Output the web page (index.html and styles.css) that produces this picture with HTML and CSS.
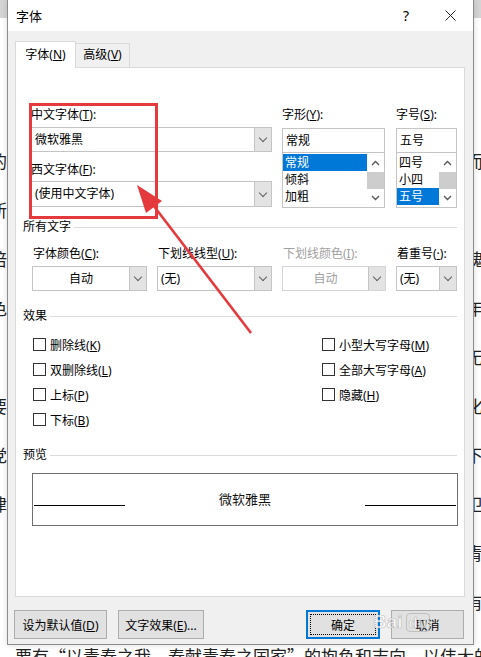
FILE: index.html
```html
<!DOCTYPE html>
<html lang="zh-CN">

<head>
	<meta charset="UTF-8">
	<meta name="viewport" content="width=device-width, initial-scale=1.0">
	<title>字体</title>
	<link rel="stylesheet" href="styles.css">
</head>

<body>
	<!-- 背后的文档页面 -->
	<div class="doc">
		<div class="doc-bar"></div>
		<div class="doc-lines">
			<p>的青春，必将在实现中华民族伟大复兴的历史进程中绽放光彩，而</p>
			<p>所以，广大青年要坚定理想信念，把个人理想融入国家发展之中，师</p>
			<p>倍加珍惜这个伟大时代，勇于担当时代赋予的历史使命，书写无愧的</p>
			<p>色的青春篇章，在奋斗中释放青春激情，追逐青春理想，展现青年</p>
			<p>　　新时代的中国青年，生逢其时，重任在肩，施展才干的舞台无比</p>
			<p>要增强学习紧迫感，如饥似渴、孜孜不倦学习，努力学习科学文化，</p>
			<p>党的事业和人民的需要是我们最重要的坐标，广大青年要胸怀天下印</p>
			<p>律己，锤炼品德修为，做到明大德、守公德、严私德，自觉做到卫</p>
			<p>、立志做有理想、敢担当、能吃苦、肯奋斗的新时代好青年，让青春</p>
			<p>　　青年一代有理想、有本领、有担当，国家就有前途，民族就有希望。</p>
			<p class="last">要有“以青春之我，春献青春之国家”的抱负和志向，以伟大的</p>
		</div>
	</div>

	<!-- 字体对话框 -->
	<div class="dialog">
		<div class="titlebar">
			<span class="title">字体</span>
			<span class="help">?</span>
			<span class="close">
				<svg width="11" height="11" viewBox="0 0 11 11">
					<path d="M.5.5l10 10M10.5.5l-10 10" stroke="#222" fill="none" />
				</svg>
			</span>
		</div>

		<div class="dlg-body">
			<div class="tabs">
				<div class="tab active">字体(<u>N</u>)</div>
				<div class="tab">高级(<u>V</u>)</div>
			</div>

			<div class="panel">
				<div class="font-row">
					<div class="col col-face">
						<div class="lbl">中文字体(<u>T</u>):</div>
						<div class="combo c-face"><span class="val">微软雅黑</span><span class="drop"></span></div>
						<div class="lbl lbl-west">西文字体(<u>F</u>):</div>
						<div class="combo c-west"><span class="val">(使用中文字体)</span><span class="drop"></span></div>
					</div>
					<div class="col col-style">
						<div class="lbl">字形(<u>Y</u>):</div>
						<div class="edit">常规</div>
						<div class="listbox">
							<ul class="items">
								<li class="sel">常规</li>
								<li>倾斜</li>
								<li>加粗</li>
							</ul>
							<div class="vscroll">
								<span class="arr"><svg width="9" height="6" viewBox="0 0 9 6"><path d="M1 5 4.5 1.5 8 5" fill="none" stroke="#555" stroke-width="1.3" /></svg></span>
								<span class="thumb"></span>
								<span class="arr"><svg width="9" height="6" viewBox="0 0 9 6"><path d="M1 1 4.5 4.5 8 1" fill="none" stroke="#555" stroke-width="1.3" /></svg></span>
							</div>
						</div>
					</div>
					<div class="col col-size">
						<div class="lbl">字号(<u>S</u>):</div>
						<div class="edit">五号</div>
						<div class="listbox">
							<ul class="items">
								<li>四号</li>
								<li>小四</li>
								<li class="sel">五号</li>
							</ul>
							<div class="vscroll">
								<span class="arr"><svg width="9" height="6" viewBox="0 0 9 6"><path d="M1 5 4.5 1.5 8 5" fill="none" stroke="#555" stroke-width="1.3" /></svg></span>
								<span class="thumb"></span>
								<span class="arr"><svg width="9" height="6" viewBox="0 0 9 6"><path d="M1 1 4.5 4.5 8 1" fill="none" stroke="#555" stroke-width="1.3" /></svg></span>
							</div>
						</div>
					</div>
				</div>

				<div class="group-head head-all">所有文字</div>
				<div class="color-row">
					<div class="cell w-color">
						<div class="lbl">字体颜色(<u>C</u>):</div>
						<div class="combo center"><span class="val">自动</span><span class="drop"></span></div>
					</div>
					<div class="cell w-uline">
						<div class="lbl">下划线线型(<u>U</u>):</div>
						<div class="combo"><span class="val">(无)</span><span class="drop"></span></div>
					</div>
					<div class="cell w-ucolor off">
						<div class="lbl">下划线颜色(<u>I</u>):</div>
						<div class="combo center"><span class="val">自动</span><span class="drop"></span></div>
					</div>
					<div class="cell w-emph">
						<div class="lbl">着重号(<u>·</u>):</div>
						<div class="combo"><span class="val">(无)</span><span class="drop"></span></div>
					</div>
				</div>

				<div class="group-head head-fx">效果</div>
				<div class="checks">
					<div class="chk"><span class="box"></span><span>删除线(<u>K</u>)</span></div>
					<div class="chk"><span class="box"></span><span>双删除线(<u>L</u>)</span></div>
					<div class="chk"><span class="box"></span><span>上标(<u>P</u>)</span></div>
					<div class="chk"><span class="box"></span><span>下标(<u>B</u>)</span></div>
					<div class="chk"><span class="box"></span><span>小型大写字母(<u>M</u>)</span></div>
					<div class="chk"><span class="box"></span><span>全部大写字母(<u>A</u>)</span></div>
					<div class="chk"><span class="box"></span><span>隐藏(<u>H</u>)</span></div>
				</div>

				<div class="group-head head-pv">预览</div>
				<div class="preview">
					<span class="pline"></span>
					<span class="ptext">微软雅黑</span>
					<span class="pline"></span>
				</div>
			</div>

			<div class="buttons">
				<button class="btn b-default">设为默认值(<u>D</u>)</button>
				<button class="btn b-effect">文字效果(<u>E</u>)...</button>
				<button class="btn b-ok">确定</button>
				<button class="btn b-cancel">取消</button>
			</div>
		</div>
	</div>

	<!-- 标注：红框和箭头 -->
	<div class="mark-box"></div>
	<svg class="mark-arrow" width="481" height="657" viewBox="0 0 481 657">
		<path d="M251 333 150 201" stroke="#e53a3d" stroke-width="2.6" fill="none" />
		<path d="M137 185 146 213 162 201z" fill="#e53a3d" />
	</svg>

	<!-- 水印 -->
	<div class="wm"><span class="wm-bai">Bai</span><span class="wm-du">du</span></div>
</body>

</html>
```

FILE: styles.css
```css
* {
	box-sizing: border-box;
}

body {
	margin: 0;
	width: 481px;
	height: 657px;
	overflow: hidden;
	position: relative;
	background: #fff;
	font-family: "Noto Sans CJK SC", sans-serif;
}

u {
	text-decoration: underline;
	text-underline-offset: 1px;
}

/* 背后的文档 */
.doc {
	width: 481px;
	height: 657px;
	overflow: hidden;
}

.doc-bar {
	height: 18px;
	background: #d4d4d4;
}

.doc-lines {
	margin: 118px 0 0 -10px;
	font-size: 17px;
	line-height: 49px;
	color: #222;
	white-space: nowrap;
}

.doc-lines p {
	margin: 0;
	height: 49px;
}

.doc-lines .last {
	margin-top: 5px;
	padding-left: 25px;
}

/* 对话框：英文和括号用西文字体，汉字落到 CJK 字体 */
.dialog {
	position: absolute;
	left: 7px;
	top: 0;
	width: 467px;
	height: 645px;
	border: 1px solid #8c8c8c;
	border-top: 0;
	background: #f0f0f0;
	font-family: "Noto Sans", "Noto Sans CJK SC", sans-serif;
	font-size: 12px;
	color: #000;
	display: flex;
	flex-direction: column;
	box-shadow: 0 0 6px rgba(0, 0, 0, .15);
}

.titlebar {
	height: 31px;
	flex: none;
	background: #fff;
	display: flex;
	align-items: center;
	padding-left: 8px;
}

.title {
	flex: 1;
	font-size: 13px;
}

.help {
	width: 40px;
	margin-right: 1px;
	text-align: center;
	font-size: 14px;
}

.close {
	width: 46px;
	display: flex;
	justify-content: center;
}

.dlg-body {
	flex: 1;
	padding: 10px 8px 0 7px;
	display: flex;
	flex-direction: column;
}

.tabs {
	display: flex;
	align-items: flex-start;
	height: 27px;
}

.tab {
	line-height: 22px;
	border: 1px solid #d9d9d9;
	border-bottom: 0;
	text-align: center;
}

.tab.active {
	position: relative;
	z-index: 1;
	width: 61px;
	height: 27px;
	background: #fff;
	padding-top: 2px;
}

.tab:not(.active) {
	width: 54px;
	height: 24px;
	margin-top: 2px;
	border-left: 0;
	background: #f0f0f0;
}

.panel {
	margin-top: -1px;
	height: 530px;
	background: #fff;
	border: 1px solid #d9d9d9;
	padding: 0 7px;
}

.lbl {
	height: 18px;
	line-height: 18px;
	white-space: nowrap;
}

/* 下拉框 */
.combo {
	height: 25px;
	border: 1px solid #c4c4c4;
	background: #fff;
	display: flex;
}

.combo .val {
	flex: 1;
	padding-left: 3px;
	line-height: 23px;
	white-space: nowrap;
}

.combo.center .val {
	text-align: center;
	padding-left: 0;
}

.drop {
	width: 17px;
	background: #e3e3e3;
	border-left: 1px solid #c4c4c4;
	display: flex;
	align-items: center;
	justify-content: center;
}

.drop::after {
	content: "";
	width: 5px;
	height: 5px;
	border-right: 1px solid #606060;
	border-bottom: 1px solid #606060;
	transform: rotate(45deg);
	margin-top: -3px;
}

/* 字体/字形/字号 */
.font-row {
	margin-top: 38px;
	padding-left: 8px;
	display: flex;
}

.col-face {
	width: 241px;
}

.col-style {
	width: 103px;
	margin-left: 10px;
}

.col-size {
	width: 61px;
	margin-left: 11px;
}

.c-face {
	margin-top: 3px;
}

.lbl-west {
	margin-top: 9px;
}

.c-west {
	margin-top: 2px;
	height: 26px;
}

.edit {
	margin-top: 4px;
	height: 25px;
	border: 1px solid #c4c4c4;
	padding-left: 3px;
	line-height: 23px;
}

.listbox {
	height: 55px;
	border: 1px solid #c4c4c4;
	border-top: 0;
	display: flex;
	padding-top: 1px;
}

.items {
	flex: 1;
	margin: 0;
	padding: 0;
	list-style: none;
}

.items li {
	height: 17px;
	line-height: 17px;
	padding-left: 2px;
}

.items li.sel {
	background: #0078d7;
	color: #fff;
}

.vscroll {
	width: 17px;
	display: flex;
	flex-direction: column;
}

.vscroll .arr {
	height: 18px;
	display: flex;
	align-items: center;
	justify-content: center;
}

.vscroll .thumb {
	height: 17px;
	background: #cdcdcd;
}

/* 分组标题 */
.group-head {
	height: 16px;
	display: flex;
	align-items: center;
	gap: 3px;
	line-height: 16px;
}

.group-head::after {
	content: "";
	flex: 1;
	border-top: 1px solid #dcdcdc;
}

.head-all {
	margin-top: 11px;
}

.color-row {
	margin-top: 10px;
	padding-left: 9px;
	display: flex;
	gap: 10px;
}

.cell .lbl {
	padding-left: 1px;
}

.cell .combo {
	margin-top: 3px;
}

.w-color,
.w-uline {
	width: 115px;
}

.w-ucolor {
	width: 104px;
}

.w-emph {
	width: 61px;
}

.off {
	color: #a0a0a0;
}

.off .combo {
	border-color: #d4d4d4;
}

/* 效果 */
.head-fx {
	margin-top: 17px;
}

.checks {
	margin-top: 8px;
	padding-left: 10px;
	display: grid;
	grid-template-columns: 289px 1fr;
	grid-template-rows: repeat(4, 25px);
	grid-auto-flow: column;
}

.chk {
	display: flex;
	align-items: center;
	gap: 4px;
	white-space: nowrap;
}

.box {
	width: 13px;
	height: 13px;
	border: 1px solid #333;
	background: #fff;
}

/* 预览 */
.head-pv {
	margin-top: 15px;
}

.preview {
	margin: 10px 0 0 9px;
	width: 426px;
	height: 53px;
	border: 1px solid #6e6e6e;
	padding: 0 1px;
	display: flex;
	align-items: center;
	justify-content: space-between;
}

.pline {
	width: 91px;
	margin-top: 12px;
	border-top: 1px solid #000;
}

.ptext {
	font-size: 13px;
	color: #111;
	margin-top: -2px;
}

/* 底部按钮 */
.buttons {
	margin: 13px 1px 0 -1px;
	display: flex;
	gap: 11px;
}

.btn {
	height: 29px;
	background: #e1e1e1;
	border: 1px solid #adadad;
	font-family: inherit;
	font-size: 12px;
	color: #000;
	padding: 0;
}

.b-default {
	width: 93px;
}

.b-effect {
	width: 86px;
}

.b-ok {
	width: 74px;
	margin-left: auto;
	position: relative;
	border-color: #0078d7;
	box-shadow: inset 0 0 0 1px #0078d7;
}

.b-ok::after {
	content: "";
	position: absolute;
	inset: 3px;
	border: 1px dotted #000;
}

.b-cancel {
	width: 73px;
}

/* 标注 */
.mark-box {
	position: absolute;
	left: 29px;
	top: 103px;
	width: 129px;
	height: 116px;
	border: 3px solid #e53a3d;
}

.mark-arrow {
	position: absolute;
	left: 0;
	top: 0;
	pointer-events: none;
}

/* 水印 */
.wm {
	position: absolute;
	left: 373px;
	top: 611px;
	display: flex;
	align-items: center;
	gap: 3px;
	font-family: "Liberation Sans", sans-serif;
	font-weight: bold;
	font-size: 19px;
	color: rgba(255, 255, 255, .75);
	-webkit-text-stroke: .6px rgba(150, 150, 150, .6);
	pointer-events: none;
}

.wm-du {
	font-size: 15px;
	padding: 0 2px;
	border: 1px solid rgba(170, 170, 170, .6);
	border-radius: 4px;
	line-height: 17px;
}
```
